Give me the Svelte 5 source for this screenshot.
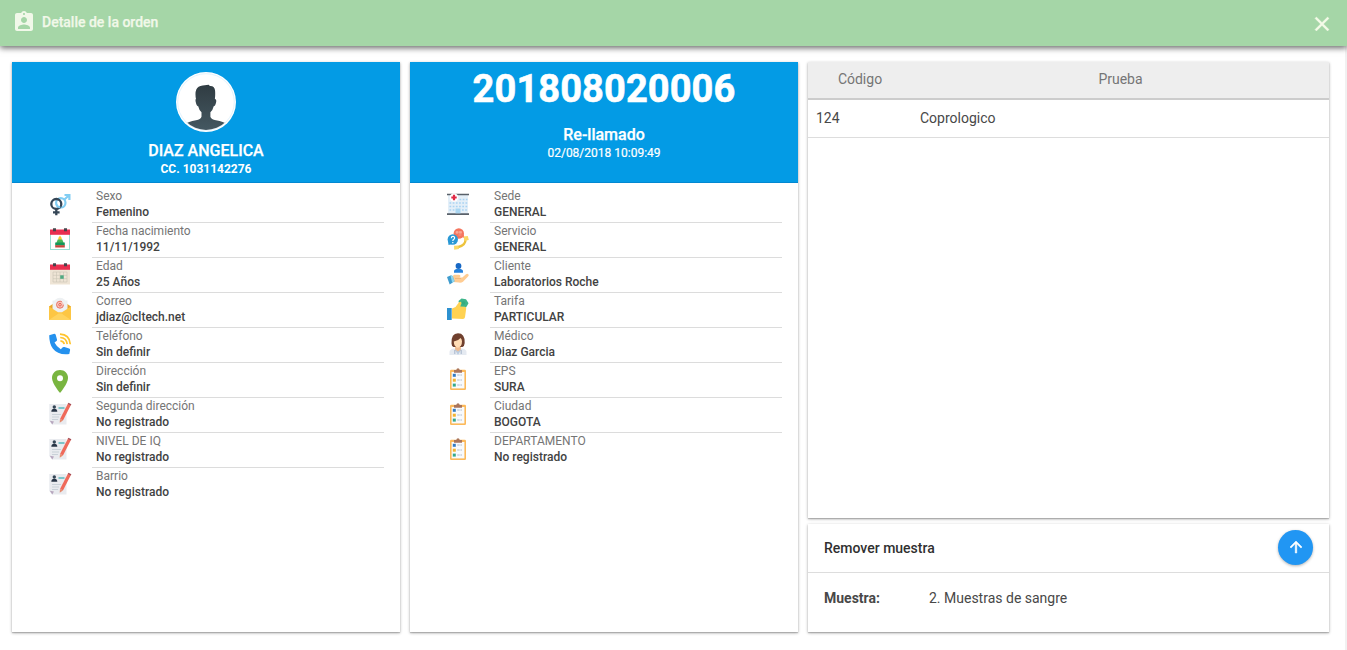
<script>
  const patient = [
    { icon: 'gender', label: 'Sexo', value: 'Femenino' },
    { icon: 'birthday', label: 'Fecha nacimiento', value: '11/11/1992' },
    { icon: 'calendar', label: 'Edad', value: '25 Años' },
    { icon: 'mail', label: 'Correo', value: 'jdiaz@cltech.net' },
    { icon: 'phone', label: 'Teléfono', value: 'Sin definir' },
    { icon: 'pin', label: 'Dirección', value: 'Sin definir' },
    { icon: 'form', label: 'Segunda dirección', value: 'No registrado' },
    { icon: 'form', label: 'NIVEL DE IQ', value: 'No registrado' },
    { icon: 'form', label: 'Barrio', value: 'No registrado' },
  ];
  const order = [
    { icon: 'hospital', label: 'Sede', value: 'GENERAL' },
    { icon: 'service', label: 'Servicio', value: 'GENERAL' },
    { icon: 'client', label: 'Cliente', value: 'Laboratorios Roche' },
    { icon: 'rate', label: 'Tarifa', value: 'PARTICULAR' },
    { icon: 'doctor', label: 'Médico', value: 'Diaz Garcia' },
    { icon: 'clipboard', label: 'EPS', value: 'SURA' },
    { icon: 'clipboard', label: 'Ciudad', value: 'BOGOTA' },
    { icon: 'clipboard', label: 'DEPARTAMENTO', value: 'No registrado' },
  ];
</script>

{#snippet icon(name)}
  <svg class="icon" class:low={name === 'pin'} viewBox="0 0 22 22" aria-hidden="true">
    {#if name === 'gender'}
      <g fill="none" stroke="#81cdf3" stroke-width="2.2">
        <circle cx="11.8" cy="9.8" r="4.700" />
        <path d="M15.200 6.700 20 2.200M15.500 2h4.900v4.900" />
      </g>
      <g fill="none" stroke="#354656" stroke-width="2.300">
        <circle cx="7.300" cy="11" r="5" />
        <path d="M7.300 16V22.300M4 19.300h6.600" />
      </g>
      <path d="M11.300 14.400a4.700 4.700 0 0 1-4-3.200" fill="none" stroke="#81cdf3" stroke-width="1.800" />
    {:else if name === 'birthday'}
      <path d="M1 5h20v17H1z" fill="#9be0d4" />
      <path d="M2 6h18v15H2z" fill="#fff" />
      <path d="M1 1.500h20v5.300H1z" fill="#e92f4f" />
      <path d="M4 .3h3v3H4zM15 .3h3v3h-3z" fill="#45454c" />
      <path d="m11 7.500 1.700 2.500v3.500H9.300V10z" fill="#f7c82e" />
      <path d="M8.700 11.500h4.600l1.400 3.500H7.300z" fill="#47b65a" />
      <path d="M6.200 14.500h9.600v3H6.200z" fill="#14965a" />
      <path d="M6.200 17.200h9.600v2.300H6.200z" fill="#c7463c" />
    {:else if name === 'calendar'}
      <path d="M1 5h20v16.500H1z" fill="#eee4d5" />
      <path d="M1 1.500h20v5.300H1z" fill="#e92f4f" />
      <path d="M4 .3h3v3H4zM15 .3h3v3h-3z" fill="#45454c" />
      <path d="M4 9h14v10H4zM4 12.300h14M4 15.700h14M7.500 9v10M11 9v10M14.500 9v10" fill="none" stroke="#c9c5b6" stroke-width=".6" />
      <path d="M11.200 12.300h3.500v3.500h-3.500z" fill="#4fa981" />
    {:else if name === 'mail'}
      <path d="M0 8.500 11 1l11 7.500V21H0z" fill="#e8a62c" />
      <path d="M3.500 2.500h15V17h-15z" fill="#eceff1" />
      <circle cx="11" cy="6.500" r="6.800" fill="#eef1f3" />
      <circle cx="11" cy="6.700" r="3.500" fill="#f7c5bd" />
      <circle cx="11" cy="6.700" r="3.500" fill="none" stroke="#e96755" stroke-width=".9" stroke-dasharray="18 4" />
      <circle cx="11" cy="6.700" r="1.300" fill="none" stroke="#e45c49" stroke-width=".9" />
      <path d="M0 8.500 9 14.300h4l9-5.800V22H0z" fill="#fdc643" />
      <path d="m0 22 9.500-6.500h3L22 22z" fill="#ffd35e" />
    {:else if name === 'phone'}
      <path d="M.2 2.200 5.300.8q1 0 1.400 1L8 6.500q.2 1-.5 1.600L5.500 9.600q2 4.200 6.300 6.700l2-2q.7-.6 1.600-.3l4.700 1.400q1.200.4 1 1.500l-.8 4.200Q9 22.500 3.800 15.500.2 10.500.2 2.200z" fill="#2491ee" />
      <g fill="none" stroke="#ffc42e" stroke-width="1.700">
        <path d="M11 1.200q9.500.2 10.300 10" />
        <path d="M11.200 4.500q6.300.3 7 6.600" />
        <path d="M11.400 7.800q3.400.3 3.800 3.400" />
      </g>
    {:else if name === 'pin'}
      <path d="M11 0C6.300 0 3 3.500 3 8c0 5.500 8 15 8 15s8-9.500 8-15c0-4.500-3.300-8-8-8z" fill="#79b540" />
      <circle cx="11" cy="8.200" r="3" fill="#fff" />
    {:else if name === 'form'}
      <path d="M.3 1h17.200v20.500H3L.3 18z" fill="#e9ebef" />
      <circle cx="5.300" cy="4" r="1.700" fill="#354656" />
      <path d="M2.300 8.700q0-2.900 3-2.900t3 2.900z" fill="#273445" />
      <path d="M9.500 5h6" stroke="#58b7bd" stroke-width="1.500" />
      <path d="M3 11.500h9M3 14h7M3 16.500h6" stroke="#bcc5ce" stroke-width=".7" />
      <path d="M.8 17.700 5 18.500 3.300 21.500z" fill="#b7a6be" />
      <path d="m20.300 1.500-7.800 15.200" stroke="#ef6a5b" stroke-width="3.300" />
      <path d="m20.900.5-.7 1.300" stroke="#a44d55" stroke-width="3.300" />
      <path d="m11 16 3 1.500-3.300 2.300z" fill="#e58b6e" />
    {:else if name === 'hospital'}
      <path d="M1 2h20v19H1z" fill="#e4eff8" />
      <path d="M0 .7h22v1.600H0zM0 20.300h22V22H0z" fill="#59616a" />
      <g fill="none" stroke="#a9d3f2" stroke-width="1.500" stroke-dasharray="1.700 1.500">
        <path d="M12.500 6.500h8M2.500 10h18M2.500 13.500h18M2.500 17h5M15 17h6" />
      </g>
      <path d="M8.500 15.500h5v4.800h-5z" fill="#a9d6f2" />
      <circle cx="7" cy="4.500" r="4.200" fill="#fff" />
      <path d="M7 1.800v5.400M4.300 4.500h5.400" stroke="#df2945" stroke-width="2.200" />
    {:else if name === 'service'}
      <circle cx="11.800" cy="5.500" r="5.200" fill="#f5755e" />
      <path d="m13.500 8.500 4 1.500-1-4z" fill="#f5755e" />
      <path d="M9 3.500h2.200v1.700H9zM12.300 3.500h2.200v1.700h-2.200zM11.500 7h3" fill="#f9a896" stroke="#f9a896" stroke-width=".7" />
      <circle cx="5.800" cy="11.500" r="5.200" fill="#2998d5" />
      <path d="m1 12.500.5 4.500 4-1z" fill="#2998d5" />
      <path d="M4.300 10.200q0-1.800 1.700-1.800t1.600 1.600q0 .9-1 1.500-.8.500-.8 1.500M5.800 14v1.300" fill="none" stroke="#fff" stroke-width="1.200" />
      <path d="M18.500 11q.500 6.500-8.500 8.500" fill="none" stroke="#edc33d" stroke-width="2.400" />
      <path d="m16.500 8.500 4.300-.6 1 4.200-4.300 1zM7 17.800l4.200-.4.800 3.600-4.800.8z" fill="#fad967" />
    {:else if name === 'client'}
      <circle cx="11.500" cy="3" r="2.900" fill="#1768c5" />
      <path d="M7 9.700V8.300q0-2.600 4.500-2.600T16 8.300v1.400z" fill="#2581dc" />
      <path d="m3.500 15 3.500-3.300h5q1.500 0 1.500 1.500l-1 1.300h2.800l3.700-3.300q1.500-.8 2.500.3.700.9-.5 2L16 18.700q-1.500 1.200-4 .9L6 19z" fill="#ffcc92" />
      <path d="M8 15.500h6" stroke="#e9aa69" stroke-width=".6" />
      <path d="m0 14 3.500-1.500q1.800-.3 2.300 1l1.700 4.800L2.700 21.500z" fill="#3f9cce" />
      <path d="m3.500 12.500 1.700 7.300 2.300-1.500-1.700-4.800q-.6-1.300-2.300-1z" fill="#8fd5ee" />
    {:else if name === 'rate'}
      <path d="m11.500 3 3-2.500 4.500.7 2.500 4-2.500 4.300H13z" fill="#3eb58a" />
      <circle cx="16.500" cy="5" r="1.800" fill="#35ab80" />
      <path d="M5 10.500 8.500 9l3.500-4.700q1.700-1 2.300.3.400 1-.3 2l-.7 1.900 4.700.3q1.300.4 1.200 1.700l-1.200 8.800q-.4 1.700-2 1.700L5 20.500z" fill="#ffd252" />
      <path d="M0 10h4.700v12H0z" fill="#2d91d0" />
    {:else if name === 'doctor'}
      <path d="M2.500 22v-3q0-2.500 4-3.500h9q4 1 4 3.500v3z" fill="#e5eaf1" />
      <path d="M8 12h6v5l-3 3.500L8 17z" fill="#f1bd91" />
      <path d="m7.500 15.800 3.500 6.200 3.500-6.200L11 18.500z" fill="#b9cce2" />
      <path d="M4.500 10.500Q4 .3 11 .3t6.700 9.700q-.2 3-2.200 4h-9q-2-.8-2-3.500z" fill="#70402e" />
      <path d="M6.800 8.500q4.500-.5 6.700-3.500 1.300 1 1.500 3.200 0 5.500-4.200 6.500-4-1-4-6.200z" fill="#ffdcb5" />
      <path d="M7.800 17v4M14.200 17v4" stroke="#8ba0bb" stroke-width=".7" />
    {:else if name === 'clipboard'}
      <rect x="3" y="1.700" width="16" height="20.300" rx="1.300" fill="#fcb95a" />
      <path d="M4.600 4h12.800v16.400H4.600z" fill="#f8fafc" />
      <path d="M7 2h2.300Q9.500.2 11 .2T12.700 2H15v2.700H7z" fill="#a9745a" />
      <path d="M5.800 5.800h3v3h-3z" fill="#327bc3" />
      <path d="M5.800 10.700h3v3h-3z" fill="#f3b330" />
      <path d="M5.800 15.600h3v3h-3z" fill="#35a98a" />
      <path d="M10.200 7h4.800M10.200 12h4.800M10.200 17h4.800" stroke="#a7b7c8" stroke-width=".9" stroke-dasharray="2.500 .7" />
    {/if}
  </svg>
{/snippet}

{#snippet fields(rows)}
  <div class="fields">
    {#each rows as row, i}
      <div class="field">
        {@render icon(row.icon)}
        <div class="field-text" class:last={i === rows.length - 1}>
          <span class="label">{row.label}</span>
          <span class="value">{row.value}</span>
        </div>
      </div>
    {/each}
  </div>
{/snippet}

<div class="page">
  <header>
    <svg class="badge" viewBox="0 0 24 24" aria-hidden="true">
      <path fill="#f1f8e9" d="M19 3h-4.180C14.400 1.840 13.300 1 12 1c-1.300 0-2.400.84-2.820 2H5c-1.100 0-2 .9-2 2v14c0 1.100.9 2 2 2h14c1.100 0 2-.9 2-2V5c0-1.100-.9-2-2-2zm-7 0c.55 0 1 .45 1 1s-.45 1-1 1-1-.45-1-1 .45-1 1-1zm0 4c1.660 0 3 1.340 3 3s-1.340 3-3 3-3-1.340-3-3 1.340-3 3-3zm6 12H6v-1.400c0-2 4-3.100 6-3.100s6 1.100 6 3.100V19z" />
    </svg>
    <h1>Detalle de la orden</h1>
    <svg class="close" viewBox="0 0 24 24" aria-hidden="true">
      <path fill="#f5fbe9" stroke="#f5fbe9" stroke-width=".4" d="M19 6.410 17.590 5 12 10.590 6.410 5 5 6.410 10.590 12 5 17.590 6.410 19 12 13.410 17.590 19 19 17.590 13.410 12z" />
    </svg>
  </header>

  <main>
    <section class="card">
      <div class="banner person">
        <svg class="avatar" viewBox="0 0 60 60" aria-hidden="true">
          <defs>
            <clipPath id="face"><circle cx="30" cy="30" r="28" /></clipPath>
            <linearGradient id="shade" x2="0" y2="1">
              <stop offset="0" stop-color="#303c42" />
              <stop offset="1" stop-color="#465a64" />
            </linearGradient>
          </defs>
          <circle cx="30" cy="30" r="30" fill="#fff" />
          <circle cx="30" cy="30" r="28.300" fill="none" stroke="#cfeafa" stroke-width=".6" />
          <path clip-path="url(#face)" fill="url(#shade)" d="M20 27q-1.200-6 .3-9.500 1.500-3.500 6.400-4l6-.8 1.200 1.300q4.800-.3 5.200 4.800.3 4-.2 8.200 1.900.3 1.200 3.200-.8 4-2.400 4-.8 3.700-3.300 6v4.500q.8 2.500 5.500 3.500 8 1.600 11 4V62H9V52.200q3-2.400 11-4 4.700-1 5.500-3.500v-4.500q-2.500-2.300-3.300-6-1.600 0-2.400-4-.7-2.900.2-3.200z" />
        </svg>
        <strong class="name">DIAZ ANGELICA</strong>
        <strong class="document">CC. 1031142276</strong>
      </div>
      {@render fields(patient)}
    </section>

    <section class="card">
      <div class="banner">
        <strong class="number">201808020006</strong>
        <strong class="status">Re-llamado</strong>
        <span class="date">02/08/2018 10:09:49</span>
      </div>
      {@render fields(order)}
    </section>

    <div class="side">
      <section class="card tests">
        <div class="row head"><span>Código</span><span>Prueba</span></div>
        <div class="row"><span>124</span><span>Coprologico</span></div>
      </section>
      <section class="card sample">
        <div class="sample-head">
          <h2>Remover muestra</h2>
          <button aria-label="Remover">
            <svg viewBox="0 0 24 24" aria-hidden="true">
              <path fill="#fff" stroke="#fff" stroke-width=".7" d="m4 12 1.410 1.410L11 7.830V20h2V7.830l5.580 5.590L20 12l-8-8-8 8z" />
            </svg>
          </button>
        </div>
        <div class="sample-body"><strong>Muestra:</strong><span>2. Muestras de sangre</span></div>
      </section>
    </div>
  </main>
</div>

<style>
  :global(body) { margin: 0; overflow: hidden; }
  .page {
    box-sizing: border-box;
    display: flex;
    flex-direction: column;
    height: 650px;
    border-right: 2px solid #f1f1f1;
    background: #fff;
    font-family: Roboto, sans-serif;
    color: #484848;
  }
  header {
    display: flex;
    align-items: center;
    flex: none;
    height: 46px;
    box-sizing: border-box;
    margin-right: -2px;
    padding: 0 13px 2px 12px;
    background: #a5d6a7;
    box-shadow: 0 2px 6px rgba(0, 0, 0, .6);
    color: #f1f8e9;
  }
  .badge { width: 24px; height: 24px; }
  h1 { flex: 1; margin: 0 0 0 6px; font-size: 14px; line-height: 20px; font-weight: 500; -webkit-text-stroke: .25px #f1f8e9; }
  .close { width: 24px; height: 24px; margin-top: 4px; }
  main { display: flex; gap: 10px; padding: 16px 0 0 12px; }
  .card {
    width: 388px;
    height: 570px;
    background: #fff;
    box-shadow: 0 1px 3px rgba(0, 0, 0, .3), 0 1px 1px rgba(0, 0, 0, .16);
  }
  .banner {
    box-sizing: border-box;
    display: flex;
    flex-direction: column;
    align-items: center;
    height: 121px;
    border-bottom: 1px solid #0288d1;
    background: #039be5;
    color: #fff;
  }
  .person { padding-top: 10px; }
  .avatar { width: 60px; height: 60px; margin-bottom: 9px; }
  .name, .status { font-size: 16px; line-height: 20px; font-weight: 500; -webkit-text-stroke: .25px #fff; }
  .document { font-size: 12px; line-height: 17px; font-weight: 700; }
  .number { height: 63px; font-size: 38px; line-height: 54px; font-weight: 700; letter-spacing: .1px; -webkit-text-stroke: .6px #fff; }
  .date { font-size: 12px; line-height: 17px; -webkit-text-stroke: .2px #fff; }
  .fields { padding: 5px 16px 0 37px; }
  .field { display: flex; justify-content: space-between; height: 35px; }
  .icon { width: 22px; height: 22px; margin-top: 5px; overflow: visible; }
  .icon.low { margin-top: 7px; }
  .field-text {
    box-sizing: border-box;
    display: flex;
    flex-direction: column;
    width: 292px;
    padding-left: 4px;
    border-bottom: 1px solid #dcdcdc;
    font-size: 12px;
    line-height: 16px;
  }
  .field-text.last { border-color: transparent; }
  .label { color: #757575; }
  .value { font-weight: 500; color: #424242; }
  .side { display: flex; flex-direction: column; gap: 6px; width: 521px; }
  .side .card { width: 100%; }
  .side .tests { height: 456px; }
  .side .sample { height: 108px; }
  .row {
    box-sizing: border-box;
    display: grid;
    grid-template-columns: 104px 1fr;
    align-items: center;
    height: 38px;
    padding-bottom: 2px;
    border-bottom: 1px solid #ddd;
    font-size: 14px;
  }
  .row span { padding-left: 8px; }
  .row.head {
    border-bottom: 2px solid #ccc;
    background: #eee;
    color: #757575;
    text-align: center;
  }
  .row.head span { padding: 0; }
  .sample-head {
    box-sizing: border-box;
    display: flex;
    align-items: center;
    justify-content: space-between;
    height: 49px;
    padding: 0 16px;
    border-bottom: 1px solid #ddd;
  }
  h2 { margin: 0; font-size: 14px; font-weight: 500; color: #303030; }
  button {
    display: grid;
    place-items: center;
    width: 35px;
    height: 35px;
    margin-bottom: 2px;
    padding: 0;
    border: 0;
    border-radius: 50%;
    background: #2196f3;
    box-shadow: 0 1px 3px rgba(0, 0, 0, .3);
  }
  button svg { width: 18px; height: 18px; }
  .sample-body {
    display: grid;
    grid-template-columns: 105px 1fr;
    align-items: center;
    height: 49px;
    padding: 0 16px;
    font-size: 14px;
  }
  .sample-body strong { font-weight: 700; }
</style>
